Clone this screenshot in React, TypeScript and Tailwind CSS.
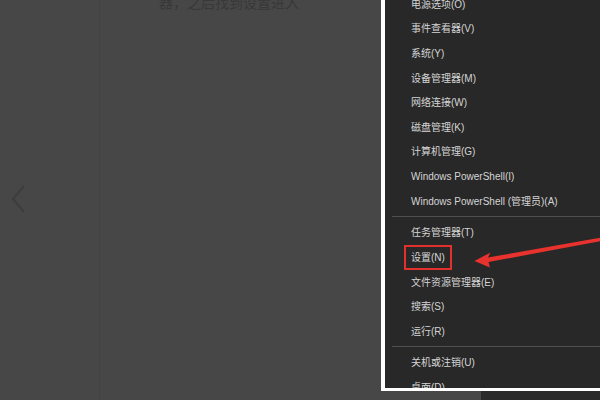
import React from "react";

type Item = { label: string; sep?: boolean; boxed?: boolean };

const items: Item[] = [
  { label: "电源选项(O)" },
  { label: "事件查看器(V)" },
  { label: "系统(Y)" },
  { label: "设备管理器(M)" },
  { label: "网络连接(W)" },
  { label: "磁盘管理(K)" },
  { label: "计算机管理(G)" },
  { label: "Windows PowerShell(I)" },
  { label: "Windows PowerShell (管理员)(A)", sep: true },
  { label: "任务管理器(T)" },
  { label: "设置(N)", boxed: true },
  { label: "文件资源管理器(E)" },
  { label: "搜索(S)" },
  { label: "运行(R)", sep: true },
  { label: "关机或注销(U)" },
  { label: "桌面(D)" },
];

function MenuShot() {
  return (
    <div className="relative h-[391px] overflow-hidden border-l-4 border-b-[3px] border-white bg-[#282828]">
      <div className="-mt-[8px] flex flex-col">
        {items.map((it) => (
          <React.Fragment key={it.label}>
            <div className="flex h-[24.6px] shrink-0 items-center pl-[26px]">
              {it.boxed ? (
                <span className="-ml-[7px] flex h-[25px] items-center border-2 border-[#e2302c] px-[5px]">
                  {it.label}
                </span>
              ) : (
                <span>{it.label}</span>
              )}
            </div>
            {it.sep && <div className="mt-[2.5px] mb-[3.7px] ml-[7px] h-px shrink-0 bg-[#4f4f4f]" />}
          </React.Fragment>
        ))}
      </div>
      <svg className="absolute inset-0 h-full w-full" viewBox="0 0 214 388" preserveAspectRatio="none">
        <polygon
          points="89,261 105,252.5 102.5,257.5 216,237.5 216,241 103,262 104.5,267.5"
          fill="#e8322e"
        />
      </svg>
    </div>
  );
}

export default function App() {
  return (
    <div
      className="flex h-[400px] w-[600px] overflow-hidden bg-[#474747] text-[10px] text-[#d4d4d4]"
      style={{ fontFamily: '"Liberation Sans", "Noto Sans CJK SC", sans-serif' }}
    >
      <div className="flex w-[100px] shrink-0 items-center border-r border-[#434343] pl-[10px]">
        <svg width="18" height="30" viewBox="0 0 18 30" className="mt-[-2px]">
          <polyline points="14,2 3,15 14,28" fill="none" stroke="#3d3d3d" strokeWidth="2" />
        </svg>
      </div>
      <div className="w-[281px] shrink-0 pl-[59px]">
        <p className="-mt-[7px] text-[14px] leading-[20px] text-[#383838]">器，之后找到设置进入</p>
      </div>
      <div className="flex w-[219px] shrink-0 flex-col">
        <MenuShot />
        <div className="flex flex-1">
          <div className="w-[100px]" />
          <div className="flex-1 bg-[#2b2b2b]" />
        </div>
      </div>
    </div>
  );
}
